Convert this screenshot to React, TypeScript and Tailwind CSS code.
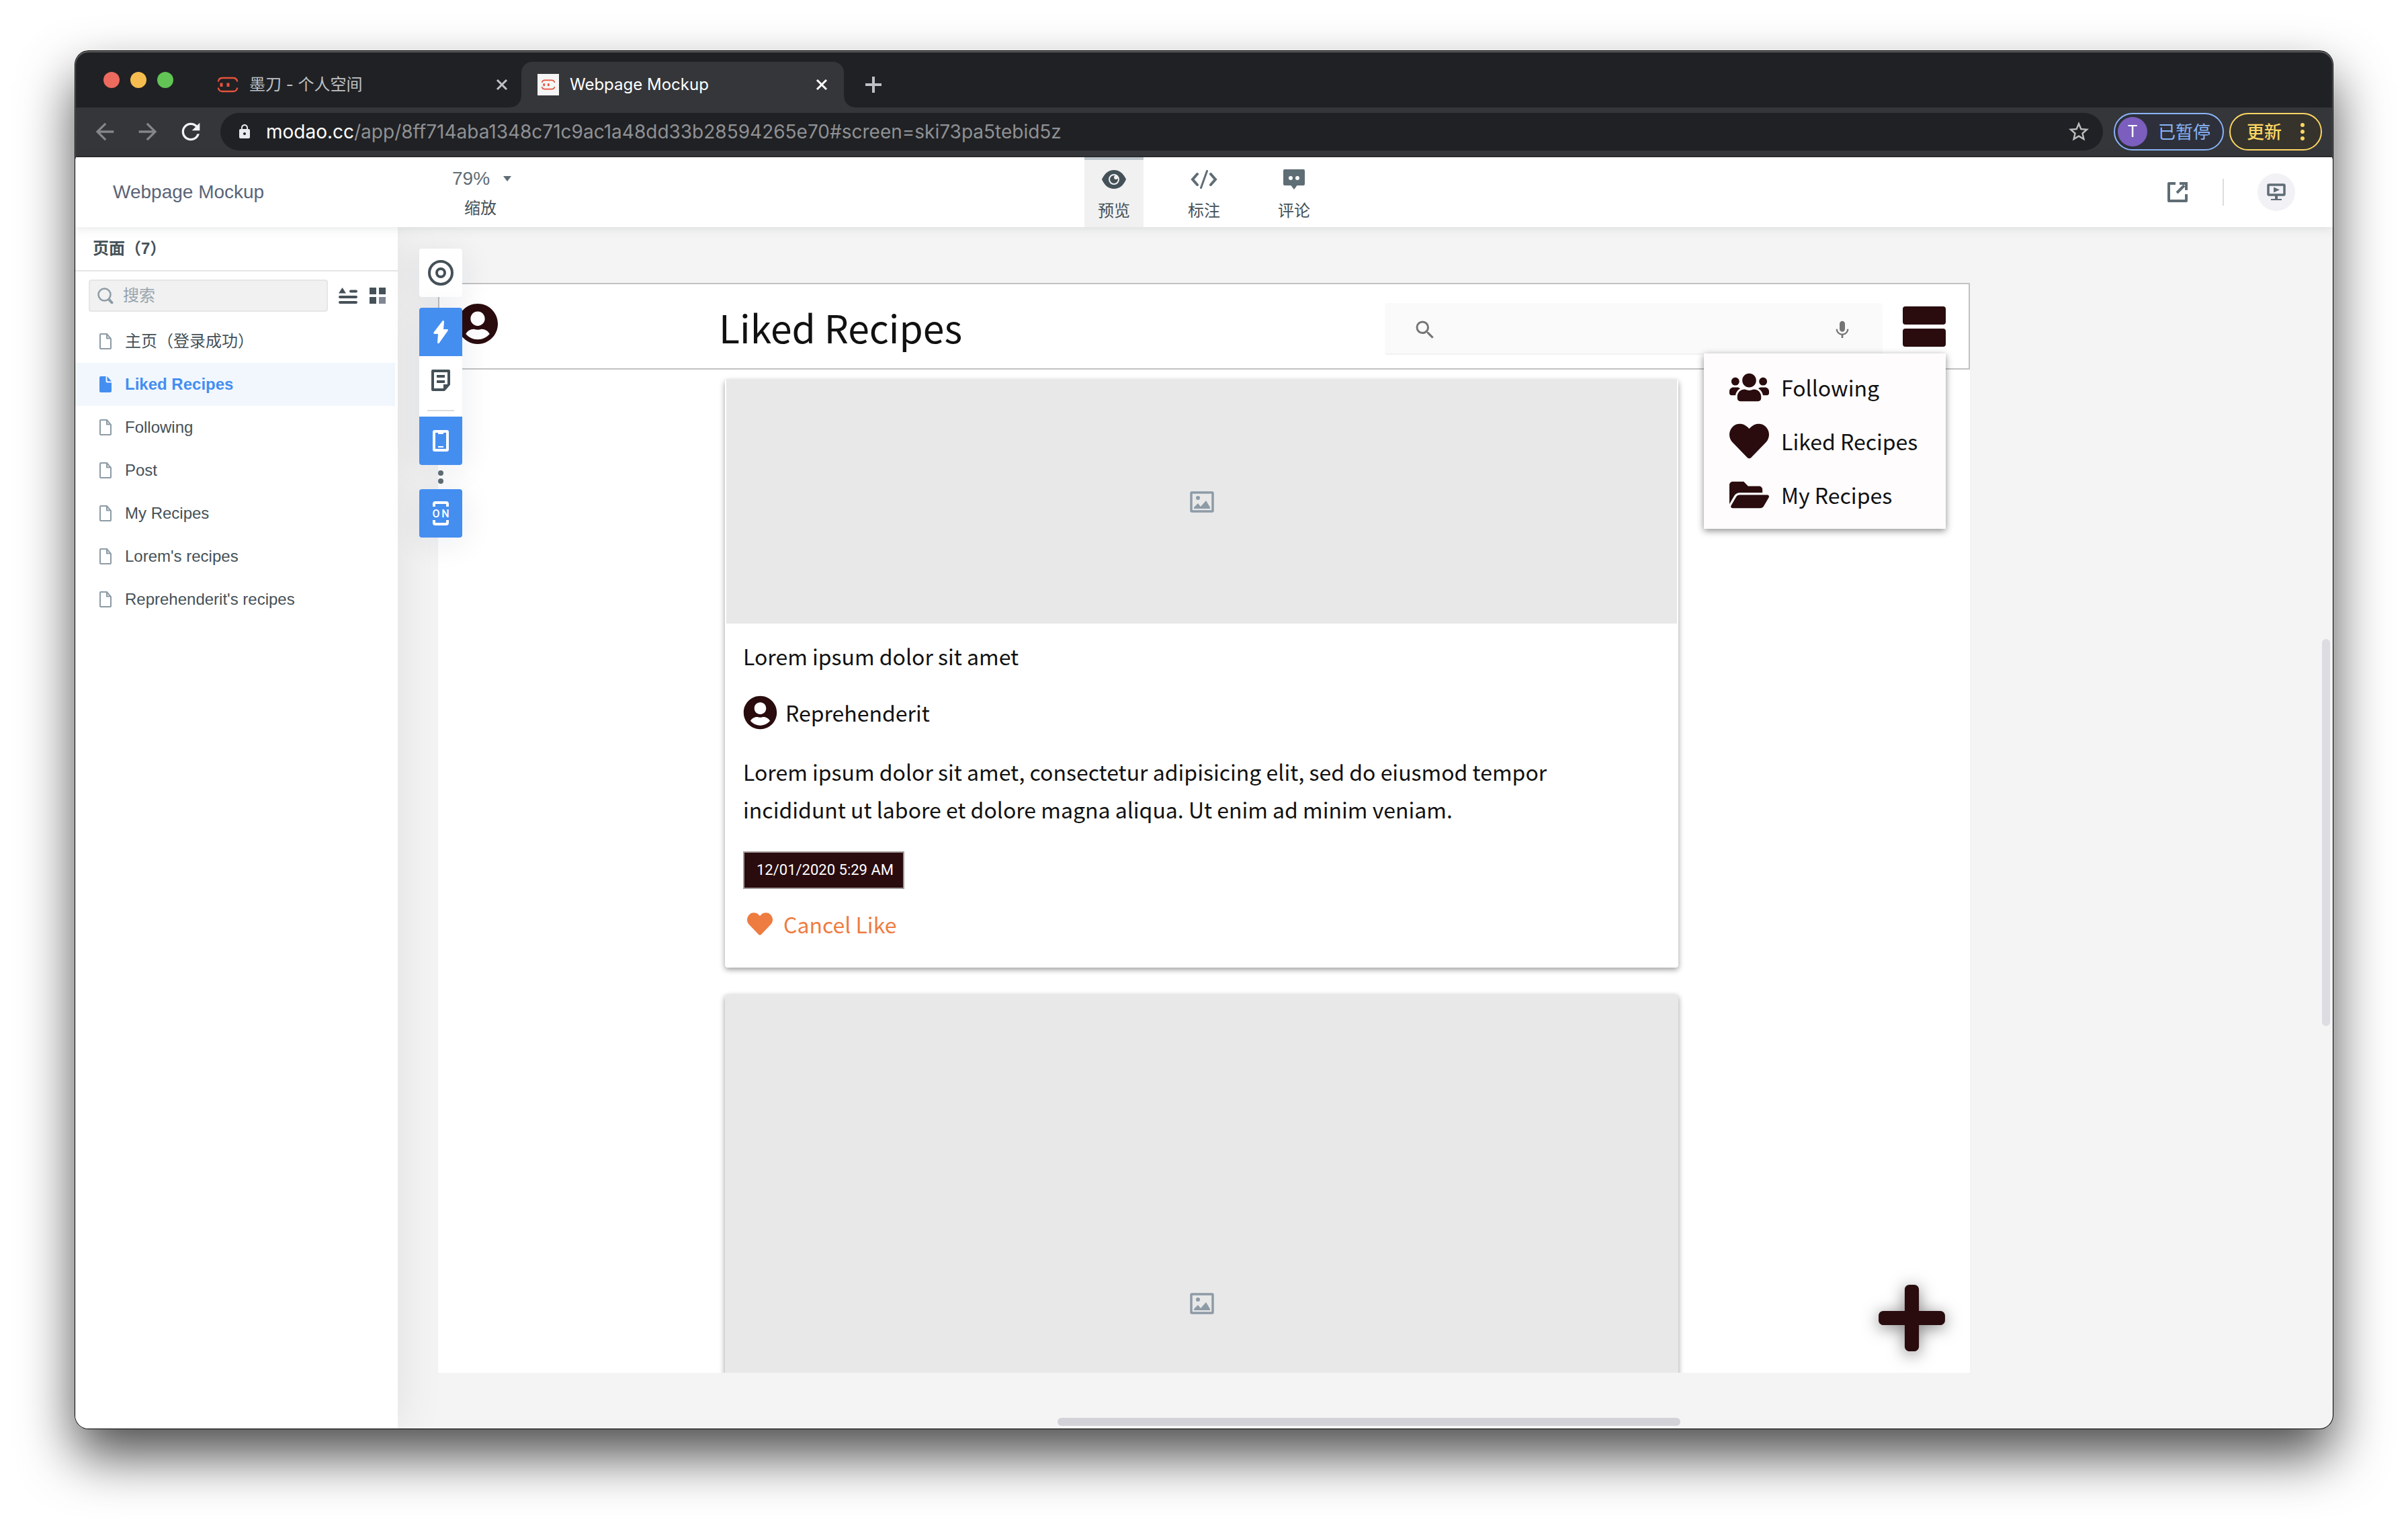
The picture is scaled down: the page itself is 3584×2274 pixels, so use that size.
import React from "react";
import { FaFolderOpen, FaHeart, FaPlus, FaUserCircle, FaUsers } from "react-icons/fa";
import { MdArrowBack, MdArrowForward, MdLock, MdMic, MdRefresh, MdSearch, MdStarBorder } from "react-icons/md";

const uiFont = "font-['Liberation_Sans','Noto_Sans_CJK_SC',sans-serif]";
const chromeFont = "font-[Inter,'Noto_Sans_CJK_SC',sans-serif]";
const canvasFont = "font-['Noto_Sans_CJK_SC',sans-serif]";

const pages = [
  "主页（登录成功）",
  "Liked Recipes",
  "Following",
  "Post",
  "My Recipes",
  "Lorem's recipes",
  "Reprehenderit's recipes",
];

function Logo({ className }: { className: string }) {
  return (
    <svg viewBox="0 0 32 24" className={className} fill="none" stroke="#e5533d" strokeWidth="2.4" strokeLinecap="round">
      <path d="M2 6.500C3 3 5 2 8 2h16c3 0 5 1 6 4.500" />
      <path d="M2 17.500C3 21 5 22 8 22h16c3 0 5-1 6-4.500" />
      <path d="M6.500 9.500v5.500M16.500 9.500v5.500" strokeWidth="4" strokeLinecap="butt" />
    </svg>
  );
}

function CloseIcon() {
  return (
    <svg viewBox="0 0 18 18" className="size-[18px]" stroke="currentColor" strokeWidth="3">
      <path d="M2 2l14 14M16 2L2 16" />
    </svg>
  );
}

function TabStrip() {
  return (
    <div className="flex h-[84px] items-end bg-[#202124]">
      <div className="flex h-[68px] items-center pl-[42px]">
        <div className="mb-[14px] flex gap-4">
          <button aria-label="Close window" className="size-6 rounded-full bg-[#ed6a5e]" />
          <button aria-label="Minimize window" className="size-6 rounded-full bg-[#f5bd4f]" />
          <button aria-label="Zoom window" className="size-6 rounded-full bg-[#61c454]" />
        </div>
      </div>
      <div className="ml-[65px] flex h-[68px] w-[453px] items-center pr-5 text-[#bdc1c6]">
        <Logo className="h-6 w-8" />
        <span className="ml-4 flex-1 text-2xl">墨刀 - 个人空间</span>
        <button aria-label="Close tab">
          <CloseIcon />
        </button>
      </div>
      <div className="relative flex h-[68px] w-[480px] items-center rounded-t-2xl bg-[#35363a] px-[24px] text-white">
        <span className="absolute bottom-0 -left-4 size-4 bg-[radial-gradient(circle_at_0_0,transparent_15px,#35363a_16px)]" />
        <span className="absolute -right-4 bottom-0 size-4 bg-[radial-gradient(circle_at_100%_0,transparent_15px,#35363a_16px)]" />
        <span className="flex size-8 items-center justify-center bg-[#f5f5f5]">
          <Logo className="h-4 w-[22px]" />
        </span>
        <span className="ml-4 flex-1 text-2xl">Webpage Mockup</span>
        <button aria-label="Close tab">
          <CloseIcon />
        </button>
      </div>
      <button aria-label="New tab" className="ml-8 flex h-[68px] items-center text-[#bdc1c6]">
        <svg viewBox="0 0 24 24" className="size-6" stroke="currentColor" strokeWidth="4">
          <path d="M12 0v24M0 12h24" />
        </svg>
      </button>
    </div>
  );
}

function AddressBar() {
  return (
    <div className="flex h-[74px] items-center border-b-2 border-[#28292c] bg-[#35363a] pr-4 pl-6">
      <button aria-label="Back" className="text-[#85868a]">
        <MdArrowBack className="size-10" />
      </button>
      <button aria-label="Forward" className="ml-6 text-[#85868a]">
        <MdArrowForward className="size-10" />
      </button>
      <button aria-label="Reload" className="ml-6 text-[#f1f3f4]">
        <MdRefresh className="size-10" />
      </button>
      <div className="mr-4 ml-6 flex h-14 flex-1 items-center rounded-full bg-[#202124] pr-[18px] pl-6">
        <MdLock className="size-6 text-[#e8eaed]" />
        <a href="#screen=ski73pa5tebid5z" className="ml-5 flex-1 text-[28px] text-[#8f9194]">
          <span className="text-white">modao.cc</span>
          /app/8ff714aba1348c71c9ac1a48dd33b28594265e70#screen=ski73pa5tebid5z
        </a>
        <button aria-label="Bookmark this page" className="text-[#bdbdbd]">
          <MdStarBorder className="size-9" />
        </button>
      </div>
      <button className="flex h-14 items-center rounded-full border-2 border-[#8ab4f8] bg-[#2d303a] pr-[18px] pl-1 text-[26px] text-[#8ab4f8]">
        <span className="mr-4 flex size-11 items-center justify-center rounded-full bg-[#7b5ebd] text-2xl text-white">T</span>
        已暂停
      </button>
      <button className="ml-2 flex h-14 items-center rounded-full border-2 border-[#fdd663] bg-[#35332c] pr-6 pl-6 text-[26px] font-medium text-[#fdd663]">
        更新
        <span className="ml-7 flex flex-col gap-1">
          <span className="size-[6px] rounded-full bg-[#fdd663]" />
          <span className="size-[6px] rounded-full bg-[#fdd663]" />
          <span className="size-[6px] rounded-full bg-[#fdd663]" />
        </span>
      </button>
    </div>
  );
}

function EyeIcon() {
  return (
    <svg viewBox="0 0 36 28" className="h-7 w-9">
      <path d="M0 14C4 5 10 0 18 0s14 5 18 14c-4 9-10 14-18 14S4 23 0 14z" fill="#455158" />
      <circle cx="18" cy="14" r="7" fill="none" stroke="#f1f1f1" strokeWidth="2" />
      <circle cx="21" cy="11" r="3" fill="#f1f1f1" />
    </svg>
  );
}

function CodeIcon() {
  return (
    <svg viewBox="0 0 40 28" className="h-7 w-10" fill="none" stroke="#5f6d75" strokeWidth="4" strokeLinecap="round">
      <path d="M10 6l-7 8 7 8M30 6l7 8-7 8" />
      <path d="M24.500 1.500l-9 25" strokeWidth="3" />
    </svg>
  );
}

function CommentIcon() {
  return (
    <svg viewBox="0 0 32 30" className="h-[30px] w-8">
      <path d="M2 0h28a2 2 0 012 2v20a2 2 0 01-2 2h-9.500L16 30l-4.500-6H2a2 2 0 01-2-2V2a2 2 0 012-2z" fill="#5f6d75" />
      <circle cx="11" cy="13" r="3" fill="#fff" />
      <circle cx="21" cy="13" r="3" fill="#fff" />
    </svg>
  );
}

function AppHeader() {
  const tab = "flex w-[88px] flex-col items-center gap-4 border-t-4 pt-[14px] text-2xl leading-8 text-[#455158]";
  return (
    <header className={`relative z-20 grid h-[104px] grid-cols-[1fr_auto_1fr] bg-white shadow-[0_2px_14px_rgba(69,81,88,0.14)] ${uiFont}`}>
      <div className="flex">
        <h1 className="w-[463px] self-center pl-14 text-[28px] text-[#5b6478]">Webpage Mockup</h1>
        <button className="flex w-[280px] flex-col items-center gap-3 self-start px-24 pt-4 text-2xl leading-8 text-[#455158]">
          <span className="flex items-center gap-5 pl-1 text-[28px] text-[#5f6d75]">
            79%
            <svg viewBox="0 0 12 8" className="h-2 w-3" fill="#5f6d75">
              <path d="M0 0h12L6 8z" />
            </svg>
          </span>
          缩放
        </button>
      </div>
      <nav className="flex gap-[46px]">
        <button className={`${tab} border-[#bcc5ca] bg-[#f1f1f1]`}>
          <span className="flex h-[30px] items-center"><EyeIcon /></span>
          预览
        </button>
        <button className={`${tab} border-transparent`}>
          <span className="flex h-[30px] items-center"><CodeIcon /></span>
          标注
        </button>
        <button className={`${tab} border-transparent`}>
          <span className="flex h-[30px] items-center"><CommentIcon /></span>
          评论
        </button>
      </nav>
      <div className="flex items-center justify-end pr-14">
        <button aria-label="Open in new window">
          <svg viewBox="0 0 30 30" className="size-[30px]" fill="none" stroke="#5f6d75" strokeWidth="4">
            <path d="M12 2H2v26h26V18" strokeLinejoin="round" />
            <path d="M14 16L25 5" />
            <path d="M18 2h10v10" />
          </svg>
        </button>
        <span className="ml-[52px] h-10 w-[2px] bg-[#dcdce2]" />
        <button aria-label="Present" className="ml-[50px] flex size-14 items-center justify-center rounded-full bg-[#f1f1f6]">
          <svg viewBox="0 0 28 26" className="h-[26px] w-7">
            <rect x="2" y="2" width="24" height="15" fill="none" stroke="#5f6d75" strokeWidth="3.500" rx="1" />
            <path d="M10 5.500l9 4-9 4zM12 18h4v5h-4zM6 23h16v2H6z" fill="#5f6d75" />
          </svg>
        </button>
      </div>
    </header>
  );
}

function FileIcon({ active }: { active: boolean }) {
  return active ? (
    <svg viewBox="0 0 18 24" className="h-6 w-[18px]" fill="#448ef0">
      <path d="M2 0h7.500v7.500a2 2 0 002 2H18V22a2 2 0 01-2 2H2a2 2 0 01-2-2V2a2 2 0 012-2z" />
      <path d="M11.500 0L18 7.500h-5a1.500 1.500 0 01-1.500-1.500z" />
    </svg>
  ) : (
    <svg viewBox="0 0 18 24" className="h-6 w-[18px]" fill="none" stroke="#8d9ba5" strokeWidth="2">
      <path d="M2 1h9l6 7v14a1 1 0 01-1 1H2a1 1 0 01-1-1V2a1 1 0 011-1z" />
      <path d="M11 1v6.500h6" />
    </svg>
  );
}

function Sidebar() {
  return (
    <aside className={`relative z-10 w-[480px] shrink-0 bg-white text-2xl text-[#455158] shadow-[0_0_70px_rgba(0,0,20,0.09)] ${uiFont}`}>
      <h2 className="h-[66px] border-b-2 border-[#e6e6e6] pl-[26px] leading-[64px] font-bold">页面（7）</h2>
      <div className="my-3 flex items-center pr-[18px] pl-5">
        <label className="flex h-12 w-[356px] items-center rounded border-2 border-[#e6e6e6] bg-[#f1f1f1] px-[11px]">
          <svg viewBox="0 0 24 24" className="size-6 shrink-0" fill="none" stroke="#8d9ba5" strokeLinecap="round">
            <circle cx="10.500" cy="10.500" r="9" strokeWidth="2.500" />
            <path d="M17.500 18l4 4.500" strokeWidth="4" />
          </svg>
          <input type="text" aria-label="搜索" placeholder="搜索" className="ml-[14px] w-full bg-transparent outline-none placeholder:text-[#97a4ad]" />
        </label>
        <button aria-label="Collapse list" className="ml-4">
          <svg viewBox="0 0 28 24" className="h-6 w-7" stroke="#455158" strokeWidth="4" strokeLinecap="round">
            <path d="M0 8.500L5.500 0 11 8.500z" fill="#455158" stroke="none" />
            <path d="M18 5.500h8M2 14h24M2 22h24" />
          </svg>
        </button>
        <button aria-label="Grid view" className="ml-[18px]">
          <svg viewBox="0 0 24 24" className="size-6" fill="#455158">
            <path d="M0 0h10v10H0zM14 0h10v10H14zM0 14h10v10H0z" />
            <path d="M14 14h10v10H14z" fill="#808794" />
          </svg>
        </button>
      </div>
      <ul>
        {pages.map((page) => {
          const active = page === "Liked Recipes";
          return (
            <li key={page} className="pr-1">
              <a
                href="#page"
                className={
                  active
                    ? "flex h-16 items-center gap-5 bg-[#f2f7fe] pl-9 font-bold text-[#448ef0]"
                    : "flex h-16 items-center gap-5 pl-9"
                }
              >
                <FileIcon active={active} />
                {page}
              </a>
            </li>
          );
        })}
      </ul>
    </aside>
  );
}

function FloatingTools() {
  const shadow = "shadow-[0_6px_50px_rgba(20,30,80,0.09)]";
  return (
    <div className="absolute top-8 left-8 z-10 flex w-16 flex-col items-center">
      <button aria-label="Focus" className={`flex h-[72px] w-16 items-center justify-center rounded bg-white ${shadow}`}>
        <svg viewBox="0 0 38 38" className="size-[38px]" fill="none" stroke="#455158" strokeWidth="4">
          <circle cx="19" cy="19" r="17" />
          <circle cx="19" cy="19" r="6" />
        </svg>
      </button>
      <div className={`mt-4 flex w-16 flex-col overflow-hidden rounded bg-white ${shadow}`}>
        <button aria-label="Highlight links" className="flex h-[72px] items-center justify-center bg-[#448ef0]">
          <svg viewBox="0 0 22 34" className="h-[34px] w-[22px]" fill="#fff">
            <path d="M14 0c2 0 2 1 2 2l-1 11h6c1 0 1 2 0 3L9 33c-1 2-3 1-3 0l1-13H2c-2 0-2-2-1-3z" />
          </svg>
        </button>
        <button aria-label="Notes" className="flex h-[72px] items-center justify-center">
          <svg viewBox="0 0 28 32" className="h-8 w-7" fill="none" stroke="#455158" strokeWidth="4">
            <path d="M2 2h24v20l-7 8H2z" strokeLinejoin="round" />
            <path d="M8 10h12M8 18h12" />
            <path d="M18 22h9l-9 9z" fill="#455158" stroke="none" />
          </svg>
        </button>
        <span className="mx-3 my-2 h-[2px] bg-[#dcdcdc]" />
        <button aria-label="Device frame" className="flex h-[72px] items-center justify-center bg-[#448ef0]">
          <svg viewBox="0 0 24 32" className="h-8 w-6" fill="none" stroke="#fff" strokeWidth="4">
            <rect x="2" y="2" width="20" height="28" rx="1" />
            <path d="M8 5h8M8 25h8" strokeWidth="2" />
          </svg>
        </button>
      </div>
      <div className="flex h-9 flex-col items-center justify-center gap-1">
        <span className="size-2 rounded-full bg-[#5f6d75]" />
        <span className="size-2 rounded-full bg-[#5f6d75]" />
      </div>
      <button aria-label="Scroll on" className={`flex h-[72px] w-16 items-center justify-center rounded bg-[#448ef0] ${shadow}`}>
        <svg viewBox="0 0 24 36" className="h-9 w-6 overflow-visible" fill="none" stroke="#fff" strokeWidth="4">
          <path d="M2 8V4a2 2 0 012-2h16a2 2 0 012 2v4M2 28v4a2 2 0 002 2h16a2 2 0 002-2v-4" />
          <g fill="#fff" stroke="none" textAnchor="middle" className="font-[Roboto,sans-serif] text-[16px] font-medium">
            <text x="5" y="24">O</text>
            <text x="19" y="24">N</text>
          </g>
        </svg>
      </button>
    </div>
  );
}

function PictureIcon() {
  return (
    <svg viewBox="0 0 36 32" className="h-8 w-9" fill="#8d9ba7">
      <rect x="2" y="2" width="32" height="28" rx="1" fill="none" stroke="#8d9ba7" strokeWidth="3.500" />
      <circle cx="12" cy="10" r="3" />
      <path d="M6 26v-2l6-6 4 5 8-9 6 10v2z" />
    </svg>
  );
}

const menuItems = [
  { label: "Following", Icon: FaUsers },
  { label: "Liked Recipes", Icon: FaHeart },
  { label: "My Recipes", Icon: FaFolderOpen },
];

function RecipeHeader() {
  return (
    <header className="relative z-[1] flex h-[129px] shrink-0 items-center border-2 border-[#c2c2c2] bg-white pr-[34px] pl-[27px]">
      <FaUserCircle className="mb-2 h-[62px] w-[60px] text-[#2a0c0e]" />
      <h2 className="ml-[329px] text-[57px] leading-[80px] text-[#111]">Liked Recipes</h2>
      <label className="mt-2 mr-[30px] ml-auto flex h-[77px] w-[741px] items-center rounded-sm border-b-2 border-[#f1f1f1] bg-[#fafafa] pt-1 pr-11 pl-[42px] text-[#757575]">
        <MdSearch className="size-9 shrink-0" />
        <input type="search" aria-label="Search recipes" className="mx-4 h-full flex-1 bg-transparent text-[32px] outline-none" />
        <MdMic className="size-8 shrink-0" />
      </label>
      <button aria-label="Menu" className="flex w-16 flex-col gap-[6px]">
        <span className="h-[27px] w-full rounded-sm bg-[#2a0c0e]" />
        <span className="h-[27px] w-full rounded-sm bg-[#2a0c0e]" />
      </button>
      <ul className="absolute top-[103px] right-[34px] w-[360px] bg-[#fefcfd] px-[38px] pt-[10px] pb-[11px] text-[32px] text-[#111] shadow-[0_3px_10px_rgba(0,0,0,0.45)]">
        {menuItems.map(({ label, Icon }) => (
          <li key={label}>
            <a href="#menu" className="flex h-20 items-center gap-[18px] whitespace-nowrap">
              <Icon className="size-[59px] shrink-0 text-[#2a0c0e]" />
              {label}
            </a>
          </li>
        ))}
      </ul>
    </header>
  );
}

function RecipeCard() {
  return (
    <article className="rounded-sm bg-white pb-[37px] text-[32px] leading-[56px] text-[#111] shadow-[0_3px_9px_rgba(0,0,0,0.4)]">
      <div className="mx-[2px] flex h-[363px] items-center justify-center bg-[#e8e8e8]">
        <PictureIcon />
      </div>
      <div className="flex flex-col items-start pl-[27px]">
        <h3 className="mt-5">Lorem ipsum dolor sit amet</h3>
        <div className="mt-7 flex items-center gap-3">
          <FaUserCircle className="size-[51px] text-[#2a0c0e]" />
          Reprehenderit
        </div>
        <p className="mt-8 w-[1250px]">
          Lorem ipsum dolor sit amet, consectetur adipisicing elit, sed do eiusmod tempor incididunt ut labore et dolore magna aliqua. Ut
          enim ad minim veniam.
        </p>
        <time
          dateTime="2020-12-01T05:29"
          className="mt-[35px] flex h-14 items-center border-2 border-[#a39a9b] bg-[#2a0c0e] pr-[14px] pl-[18px] font-[Roboto,sans-serif] text-[22px] text-white"
        >
          12/01/2020 5:29 AM
        </time>
        <button className="mt-6 flex items-center gap-4 pl-[6px] text-[#ee7c41]">
          <FaHeart className="size-[38px]" />
          Cancel Like
        </button>
      </div>
    </article>
  );
}

function Prototype() {
  return (
    <section className={`relative flex min-h-0 flex-1 flex-col overflow-hidden bg-white ${canvasFont}`}>
      <RecipeHeader />
      <div className="mr-[434px] ml-[427px] flex min-h-0 flex-1 flex-col gap-10 pt-[15px]">
        <RecipeCard />
        <article className="flex h-[920px] shrink-0 items-center justify-center rounded-sm bg-[#e8e8e8] shadow-[0_3px_9px_rgba(0,0,0,0.4)]">
          <PictureIcon />
        </article>
      </div>
      <button aria-label="Add recipe" className="absolute right-[37px] bottom-[25px] text-[#2a0c0e]">
        <FaPlus className="h-[113px] w-[99px] drop-shadow-[0_4px_12px_rgba(0,0,0,0.5)]" />
      </button>
    </section>
  );
}

export default function App() {
  return (
    <div className="flex h-screen flex-col bg-white px-28 pt-[76px] pb-[148px]">
      <div className={`relative flex min-h-0 flex-1 flex-col overflow-hidden rounded-[20px] bg-[#f4f4f4] shadow-[0_0_0_1px_#000,0_40px_80px_rgba(0,0,0,0.7)] ${chromeFont}`}>
        <TabStrip />
        <AddressBar />
        <AppHeader />
        <div className="flex min-h-0 flex-1">
          <Sidebar />
          <main className="relative flex min-w-0 flex-1 flex-col py-[83px] pr-[540px] pl-[60px]">
            <FloatingTools />
            <Prototype />
            <span className="absolute top-[613px] right-1 h-[576px] w-3 rounded-full bg-[#dcdce2]" />
            <span className="absolute right-[971px] bottom-1 h-3 w-[927px] rounded-full bg-[#d2d2d8]" />
          </main>
        </div>
        <span className="pointer-events-none absolute inset-x-0 top-0 z-30 h-40 rounded-t-[20px] border-x border-t-2 border-[#5e605e]" />
      </div>
    </div>
  );
}
